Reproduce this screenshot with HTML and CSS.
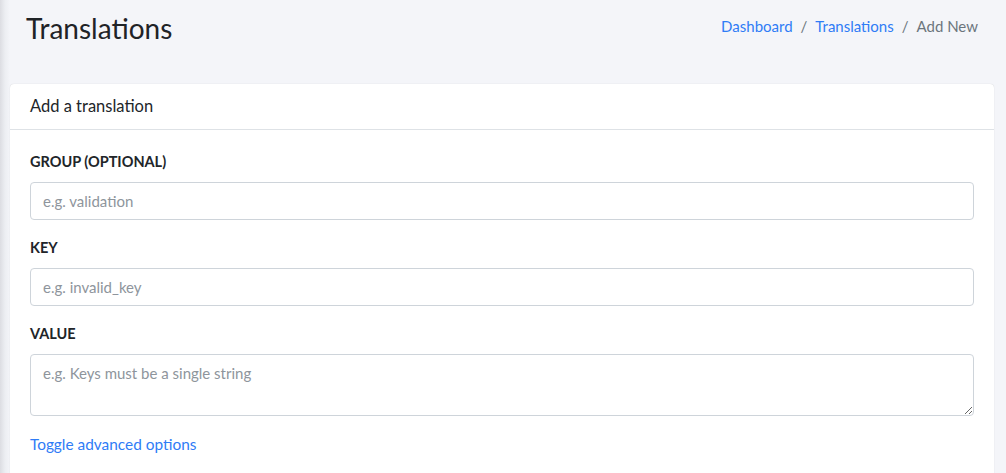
FILE: index.html
```html
<!DOCTYPE html>
<html lang="en">
<head>
  <meta charset="UTF-8" />
  <title>Translations - Add New</title>
  <link rel="stylesheet" href="styles.css">
</head>
<body>
  <div class="content">
    <div class="page-header">
      <h1 class="page-title">Translations</h1>
      <nav class="breadcrumb">
        <a href="#">Dashboard</a>
        <span class="sep">/</span>
        <a href="#">Translations</a>
        <span class="sep">/</span>
        <span class="current">Add New</span>
      </nav>
    </div>

    <div class="card">
      <div class="card-header">Add a translation</div>
      <div class="card-body">
        <div class="form-group">
          <label for="group">Group (optional)</label>
          <input id="group" type="text" placeholder="e.g. validation">
        </div>
        <div class="form-group">
          <label for="key">Key</label>
          <input id="key" type="text" placeholder="e.g. invalid_key">
        </div>
        <div class="form-group">
          <label for="value">Value</label>
          <textarea id="value" placeholder="e.g. Keys must be a single string"></textarea>
        </div>
        <a href="#" class="toggle-link">Toggle advanced options</a>
      </div>
    </div>
  </div>
</body>
</html>
```

FILE: styles.css
```css
body {
  margin: 0;
  font-family: "Lato", "Liberation Sans", sans-serif;
  color: #212529;
  background: linear-gradient(to right, #dcdde2 0, #eceef2 5px, #f4f5f9 10px);
  height: 473px;
  overflow: hidden;
}
.content {
  padding: 0 12px 0 10px;
}
.page-header {
  display: flex;
  justify-content: space-between;
  align-items: flex-start;
  height: 84px;
  padding: 0 16px 0 16px;
  box-sizing: border-box;
}
.page-title {
  margin: 11px 0 0;
  font-size: 28px;
  font-weight: 400;
  line-height: 34px;
  color: #1f2327;
}
.breadcrumb {
  margin-top: 14px;
  font-size: 15px;
  line-height: 24px;
  display: flex;
  gap: 8px;
}
.breadcrumb a {
  color: #2f7cf6;
  text-decoration: none;
}
.breadcrumb .sep,
.breadcrumb .current {
  color: #6c757d;
}
.card {
  background: #fff;
  border-radius: 4px;
  box-shadow: 0 0 1px rgba(0, 0, 0, 0.2);
}
.card-header {
  height: 45px;
  line-height: 45px;
  padding: 0 20px;
  font-size: 16.5px;
  border-bottom: 1px solid #dee2e6;
}
.card-body {
  padding: 20px 20px 30px;
}
.form-group {
  margin-bottom: 16px;
}
.form-group label {
  display: block;
  font-size: 14.5px;
  font-weight: 700;
  text-transform: uppercase;
  line-height: 24px;
  margin-bottom: 8px;
}
.form-group input,
.form-group textarea {
  display: block;
  width: 100%;
  box-sizing: border-box;
  border: 1px solid #ced4da;
  border-radius: 4px;
  padding: 6px 12px;
  font-family: inherit;
  font-size: 15px;
  line-height: 24px;
  color: #212529;
}
.form-group input {
  height: 38px;
}
.form-group textarea {
  height: 62px;
  resize: vertical;
}
::placeholder {
  color: #8e959c;
}
.toggle-link {
  display: block;
  font-size: 15.4px;
  line-height: 24px;
  color: #2f7cf6;
  text-decoration: none;
}
```
